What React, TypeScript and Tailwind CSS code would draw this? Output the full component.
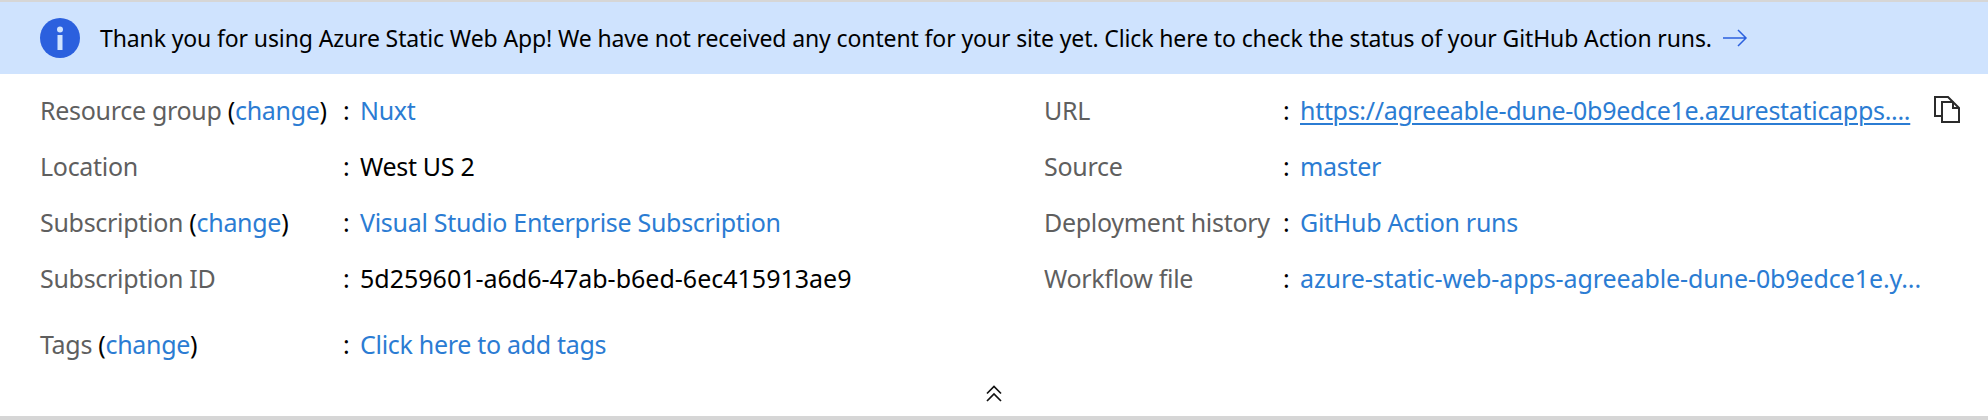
import type { ReactNode } from "react";

const Change = () => (
  <>
    {" "}
    <span className="text-black">(</span>
    <a className="text-[#2b7cd3]">change</a>
    <span className="text-black">)</span>
  </>
);

const leftRows: { label: ReactNode; value: ReactNode; cls: string }[] = [
  { label: <>Resource group<Change /></>, value: <a className="text-[#2b7cd3]">Nuxt</a>, cls: "h-[56px]" },
  { label: "Location", value: <span className="text-black">West US 2</span>, cls: "h-[56px]" },
  { label: <>Subscription<Change /></>, value: <a className="text-[#2b7cd3]">Visual Studio Enterprise Subscription</a>, cls: "h-[56px]" },
  { label: "Subscription ID", value: <span className="tracking-[0px] text-black">5d259601-a6d6-47ab-b6ed-6ec415913ae9</span>, cls: "h-[66px]" },
  { label: <>Tags<Change /></>, value: <a className="text-[#2b7cd3]">Click here to add tags</a>, cls: "h-[56px]" },
];

const rightRows: { label: string; value: ReactNode }[] = [
  {
    label: "URL",
    value: <a className="text-[#2b7cd3] underline decoration-2 underline-offset-[3px]">https://agreeable-dune-0b9edce1e.azurestaticapps....</a>,
  },
  { label: "Source", value: <a className="text-[#2b7cd3]">master</a> },
  { label: "Deployment history", value: <a className="text-[#2b7cd3]">GitHub Action runs</a> },
  { label: "Workflow file", value: <a className="tracking-[-0.1px] text-[#2b7cd3]">azure-static-web-apps-agreeable-dune-0b9edce1e.y...</a> },
];

export default function App() {
  return (
    <div className="flex h-[420px] w-[1988px] flex-col overflow-hidden bg-white font-['Noto_Sans',sans-serif] text-[25px] tracking-[-0.3px]">
      <div className="h-[2px] bg-[#d6d6d6]" />
      {/* Banner */}
      <div className="flex h-[72px] items-center bg-[#cfe3fe] pl-[40px] text-[23px] tracking-[-0.12px]">
        <svg width="40" height="40" viewBox="0 0 40 40" className="mr-[20px] shrink-0">
          <circle cx="20" cy="20" r="20" fill="#2b60de" />
          <circle cx="20" cy="11.5" r="3" fill="#cfe3fe" />
          <rect x="17.5" y="17" width="5" height="15" fill="#cfe3fe" />
        </svg>
        <span className="text-black">
          Thank you for using Azure Static Web App! We have not received any content for your site yet. Click here to check the status of your GitHub Action runs.
        </span>
        <svg width="26" height="18" viewBox="0 0 26 18" className="ml-[10px] shrink-0" fill="none" stroke="#2b60de" strokeWidth="1.5">
          <path d="M1 9h23M16 1l8 8-8 8" />
        </svg>
      </div>

      {/* Essentials */}
      <div className="flex pt-[9px]">
        <div className="w-[1044px] pl-[40px]">
          {leftRows.map((row, i) => (
            <div key={i} className={`flex items-start ${row.cls}`}>
              <div className="w-[303px] pt-[10px] leading-[34px] text-[#5f5f5f]">{row.label}</div>
              <div className="w-[17px] pt-[10px] leading-[34px] text-black">:</div>
              <div className="pt-[10px] leading-[34px]">{row.value}</div>
            </div>
          ))}
        </div>
        <div className="flex-1">
          {rightRows.map((row, i) => (
            <div key={i} className="flex h-[56px] items-start">
              <div className="w-[239px] pt-[10px] leading-[34px] text-[#5f5f5f]">{row.label}</div>
              <div className="w-[17px] pt-[10px] leading-[34px] text-black">:</div>
              <div className="w-[611px] whitespace-nowrap pt-[10px] leading-[34px]">{row.value}</div>
              {i === 0 && (
                <svg width="28" height="29" viewBox="0 0 28 29" className="ml-[22px] mt-[12px] shrink-0" fill="none" stroke="#2b2b2b" strokeWidth="2">
                  <path d="M9 21H2V2h13l5 5" />
                  <path d="M9 7h11l6 6v14H9zM20 7v6h6" fill="#fff" />
                </svg>
              )}
            </div>
          ))}
        </div>
      </div>

      {/* Collapse */}
      <div className="flex justify-center pt-[12px]">
        <svg width="16" height="17" viewBox="0 0 16 17" fill="none" stroke="#111" strokeWidth="1.7">
          <path d="M1 8.5l7-7 7 7M1 16l7-7 7 7" />
        </svg>
      </div>

      <div className="mt-auto h-[4px] bg-[#d6d6d6]" />
    </div>
  );
}
